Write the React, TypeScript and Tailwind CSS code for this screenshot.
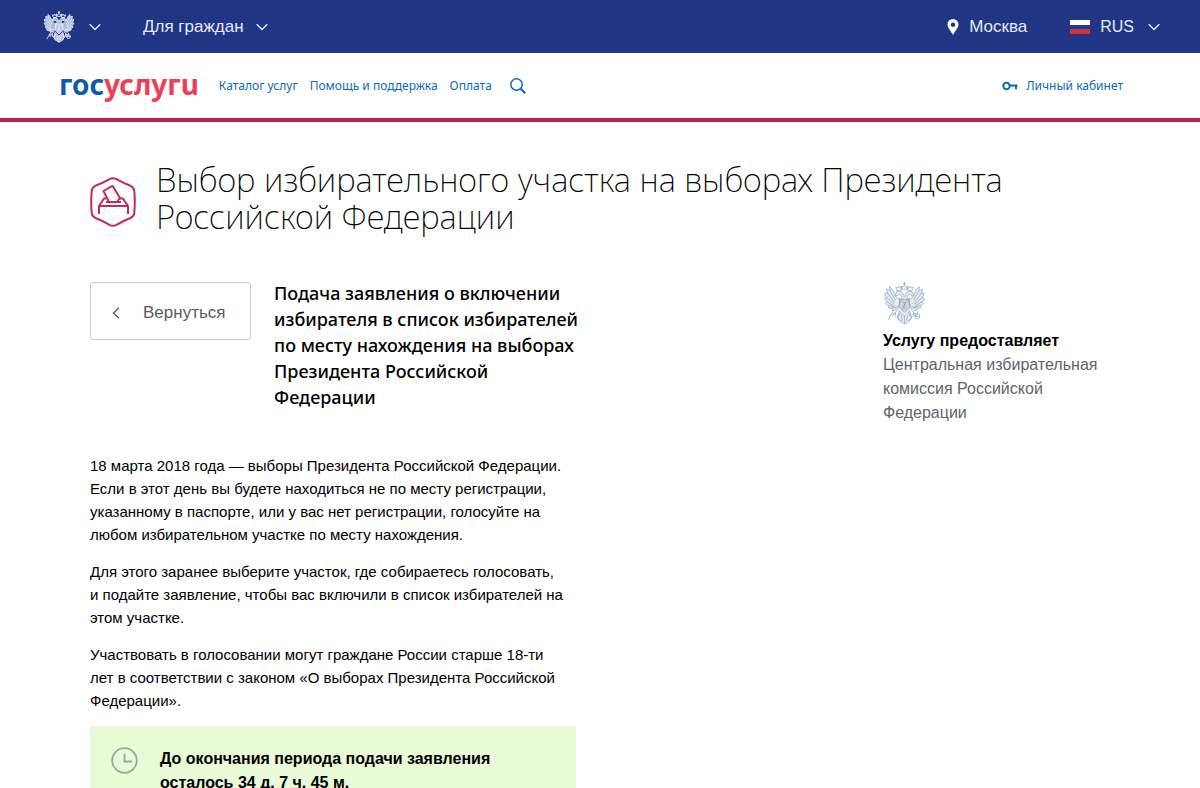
import type { ReactNode } from 'react';

const navLinks = ['Каталог услуг', 'Помощь и поддержка', 'Оплата'];

const paragraphs = [
  '18 марта 2018 года — выборы Президента Российской Федерации. Если в этот день вы будете находиться не по месту регистрации, указанному в паспорте, или у вас нет регистрации, голосуйте на любом избирательном участке по месту нахождения.',
  'Для этого заранее выберите участок, где собираетесь голосовать, и подайте заявление, чтобы вас включили в список избирателей на этом участке.',
  'Участвовать в голосовании могут граждане России старше 18-ти лет в соответствии с законом «О выборах Президента Российской Федерации».',
];

function Wing({ fillOpacity }: { fillOpacity: number }) {
  return (
    <g>
      {/* Feathers */}
      <path
        d="M17 16C14 17 11 15 10 11Q9 7 5.500 4.500Q5.500 7 6 8.500Q4 7 2.500 7Q2.500 9.500 4 11.500Q2 10.500 .7 11Q1 13.500 3 15.500Q1.500 15 .5 16Q1.200 18.500 3.500 19.500Q2 20 1.500 21Q3 23 5 23Q4 24 4 25Q6 26.500 8 25.500Q8 27 8.500 28Q11 28 14 25Z"
        fill="currentColor"
        fillOpacity={fillOpacity}
      />
      <path d="M6 8.500L11 18M4 11.500L10 20M3 15.500L10 22M3.500 19.500L10 24M5 23L11 25M8 25.500L13 24" />
      {/* Head, crown and neck */}
      <path d="M19 17C16 15 18 12.500 15 12L12 13.500L11 12L13 9H16C19 10 19 13 20 15" fill="currentColor" fillOpacity={fillOpacity} />
      <path d="M12.500 8.500L11.500 5L13.500 6L14.500 4L15.500 6L17.500 5.500L16.500 8.500Z" />
      {/* Leg and claws */}
      <path d="M14 26L11 30L7 32M11 30L8 34M11 30L11.500 34M16 30L13 35L16 38" />
    </g>
  );
}

function Eagle({ className, filled }: { className: string; filled?: boolean }) {
  const fillOpacity = filled ? 0.7 : 0.2;
  return (
    <svg className={className} viewBox="0 0 40 42" fill="none" stroke="currentColor" strokeWidth={filled ? 1.2 : 0.6} strokeLinejoin="round" aria-hidden="true">
      <Wing fillOpacity={fillOpacity} />
      <g transform="translate(40 0) scale(-1 1)">
        <Wing fillOpacity={fillOpacity} />
      </g>
      <path d="M20 0V3M18.500 1.500H21.500M17.500 7L16.500 4L18.500 5L20 3L21.500 5L23.500 4L22.500 7Z" />
      <path d="M15 17H25V24C25 27 22 28 20 30C18 28 15 27 15 24Z" fill="currentColor" fillOpacity={filled ? 0.8 : 0.4} />
      <path d="M18 19L21 21L19 24L22 26M22 18L18 27" />
      <path d="M15 28L20 33L25 28L27 34L25 38L20 41L15 38L13 34Z" fill="currentColor" fillOpacity={fillOpacity} />
      <path d="M17 32L18 38M23 32L22 38M20 33V41" />
      <path d="M4 37L9 28" />
      <circle cx="32.500" cy="33.500" r="2.500" />
      <path d="M32.500 29V31M30 33.500H35" />
    </svg>
  );
}

function Chevron() {
  return (
    <svg className="h-2 w-3 shrink-0" viewBox="0 0 12 8" fill="none" stroke="currentColor" strokeWidth="1.4" aria-hidden="true">
      <path d="M.7 1.200L6 6.500L11.300 1.200" />
    </svg>
  );
}

function TopButton({ label, children }: { label?: string; children: ReactNode }) {
  return (
    <button type="button" aria-label={label} className="flex items-center">
      {children}
      <Chevron />
    </button>
  );
}

export default function App() {
  return (
    <div className="min-h-screen bg-white font-['Liberation_Sans',Arial,sans-serif] text-black">
      {/* Top bar */}
      <div className="flex h-[53px] items-center bg-[#203684] pr-10 pl-[43px] text-[17px] text-[#e4eaf8]">
        <TopButton label="Порталы">
          <Eagle className="mr-[14px] h-8 w-8" filled />
        </TopButton>
        <div className="ml-[42px]">
          <TopButton>
            <span className="mr-3">Для граждан</span>
          </TopButton>
        </div>
        <a href="#city" className="ml-auto flex items-center">
          <svg className="mr-[10px] h-4 w-3" viewBox="0 0 12 16" fill="white" aria-hidden="true">
            <path fillRule="evenodd" d="M6 0A5.500 5.500 0 0 0 .5 5.500C.5 9 4 12 6 16C8 12 11.500 9 11.500 5.500A5.500 5.500 0 0 0 6 0ZM6 3.500A2.200 2.200 0 1 1 6 7.900A2.200 2.200 0 0 1 6 3.500Z" />
          </svg>
          Москва
        </a>
        <div className="ml-[43px] text-base">
          <TopButton>
            <svg className="mr-[10px] h-[14px] w-5" viewBox="0 0 20 14" aria-hidden="true">
              <path fill="#fff" d="M0 0H20V5H0Z" />
              <path fill="#173c9f" d="M0 5H20V9H0Z" />
              <path fill="#d8302f" d="M0 9H20V14H0Z" />
            </svg>
            <span className="mr-[14px]">RUS</span>
          </TopButton>
        </div>
      </div>

      {/* Navigation */}
      <header className="flex h-[69px] items-center border-b-4 border-[#bb2352] pt-px pr-[77px] pl-[59px] font-['Noto_Sans','Open_Sans',sans-serif] text-xs text-[#0b6cb1]">
        <a href="#home" aria-label="Госуслуги" className="mr-5 pb-1 text-[28px] leading-8 font-bold text-[#ee3f58]">
          <span className="text-[#0d5ca8]">гос</span>услугu
        </a>
        <nav className="flex items-center gap-3">
          {navLinks.map((link) => (
            <a key={link} href="#nav">{link}</a>
          ))}
        </nav>
        <button type="button" aria-label="Поиск" className="ml-[18px]">
          <svg className="h-4 w-4" viewBox="0 0 16 16" fill="none" stroke="currentColor" aria-hidden="true">
            <circle cx="6.500" cy="6.500" r="5.700" strokeWidth="1.500" />
            <path d="M10.700 10.700L15.200 15.200" strokeWidth="2.200" />
          </svg>
        </button>
        <a href="#account" className="ml-auto flex items-center gap-2">
          <svg className="h-3 w-4" viewBox="0 0 16 12" fill="none" stroke="currentColor" strokeWidth="2" aria-hidden="true">
            <circle cx="4.500" cy="6" r="3.200" />
            <path d="M8 5.500H15.500M14 6V9.200" />
          </svg>
          Личный кабинет
        </a>
      </header>

      <main className="px-[90px] pt-[39px]">
        {/* Title */}
        <div className="flex items-start gap-5">
          <svg className="mt-4 h-[50px] w-[46px] shrink-0" viewBox="0 0 46 50" fill="none" stroke="#c42a5b" strokeWidth="2" strokeLinejoin="round" aria-hidden="true">
            <path d="M19.500 2.200Q23 .2 26.500 2.200Q33 6 40.500 8.800Q44 10.300 44.300 14Q45.300 25 44.300 36Q44 39.500 40.500 41Q33 44 26.500 47.800Q23 49.800 19.500 47.800Q13 44 5.500 41Q2 39.500 1.700 36Q.7 25 1.700 14Q2 10.300 5.500 8.800Q13 6 19.500 2.200Z" />
            <path d="M9 37V29H38V37M9 29L14 21.500H16M38 29L33 21.500H30M16 25H31" />
            <path d="M19 25L13.500 14L22.500 8.800L30 21L27 25" />
          </svg>
          <h1 className="max-w-[860px] font-['Noto_Sans','Open_Sans',sans-serif] text-[33px] leading-[37px] font-extralight">
            Выбор избирательного участка на выборах Президента Российской Федерации
          </h1>
        </div>

        <div className="mt-[45px] flex items-start">
          <button type="button" className="mt-0.5 flex h-[58px] w-[161px] shrink-0 items-center rounded-[3px] border border-[#ccc] pt-1 pl-[21px] text-[17px] text-[#5c5c5c]">
            <svg className="mr-[23px] h-3 w-2" viewBox="0 0 8 12" fill="none" stroke="currentColor" strokeWidth="1.300" aria-hidden="true">
              <path d="M7 .8L1.500 6L7 11.200" />
            </svg>
            Вернуться
          </button>
          <h2 className="ml-[23px] w-[320px] font-['Noto_Sans','Open_Sans',sans-serif] text-[18px] leading-[26px] font-medium">
            Подача заявления о включении избирателя в список избирателей по месту нахождения на выборах Президента Российской Федерации
          </h2>
          <aside className="mt-0.5 ml-auto w-[227px] text-base leading-6 text-[#5f6370]">
            <Eagle className="mb-1 h-[43px] w-[43px] text-[#8199b0]" />
            <h3 className="font-bold text-black">Услугу предоставляет</h3>
            <p>Центральная избирательная комиссия Российской Федерации</p>
          </aside>
        </div>

        <div className="mt-[29px] w-[486px] text-[15px] leading-[23px]">
          {paragraphs.map((text) => (
            <p key={text} className="mb-[14px] pr-3">{text}</p>
          ))}
          {/* Deadline notice */}
          <div className="flex gap-[22px] bg-[#e8fad6] px-[21px] py-[21px] text-base leading-6 font-bold">
            <svg className="h-[27px] w-[27px] shrink-0" viewBox="0 0 27 27" fill="none" stroke="#9da99b" strokeWidth="1.800" aria-hidden="true">
              <circle cx="13.500" cy="13.500" r="12.300" />
              <path d="M13.500 6.500V14.500H21" />
            </svg>
            <p>До окончания периода подачи заявления осталось 34 д. 7 ч. 45 м.</p>
          </div>
        </div>
      </main>
    </div>
  );
}
